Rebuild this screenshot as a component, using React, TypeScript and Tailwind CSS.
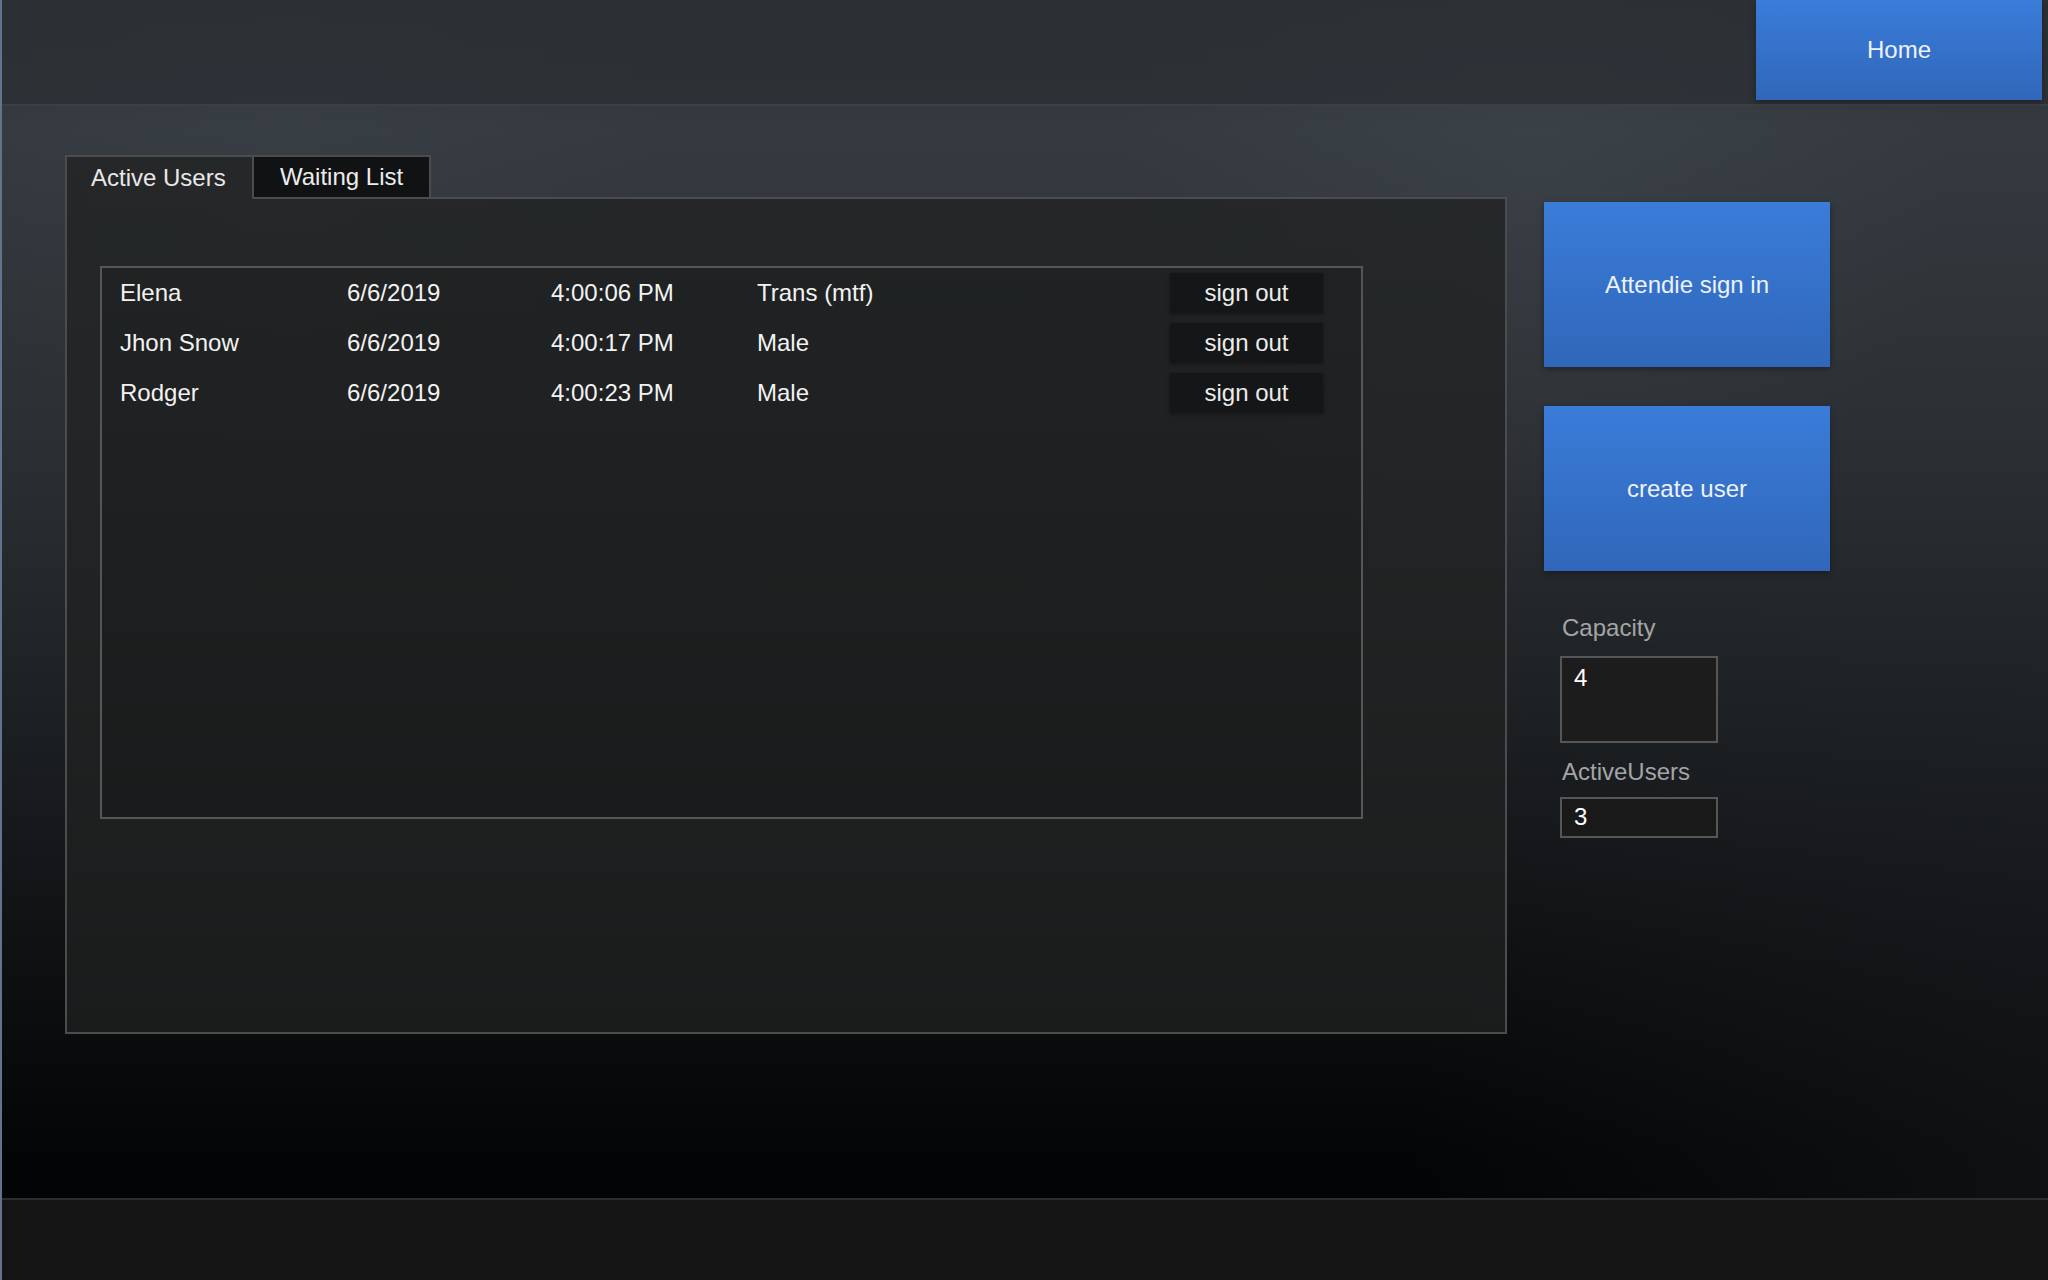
const users = [
  { name: "Elena", date: "6/6/2019", time: "4:00:06 PM", gender: "Trans (mtf)" },
  { name: "Jhon Snow", date: "6/6/2019", time: "4:00:17 PM", gender: "Male" },
  { name: "Rodger", date: "6/6/2019", time: "4:00:23 PM", gender: "Male" },
];

const blueBtn =
  "flex items-center justify-center bg-gradient-to-b from-[#3a7cd9] to-[#3067ba] text-[24px] text-[#eef2f8] shadow-[0_2px_6px_rgba(0,0,0,0.35)]";

export default function App() {
  return (
    <div className="relative flex h-[1280px] w-full flex-col overflow-hidden border-l-2 border-[#62748b] bg-[radial-gradient(circle_at_75%_12%,rgba(120,130,140,0.10),transparent_22%),radial-gradient(circle_at_14%_8%,rgba(120,130,140,0.06),transparent_18%),radial-gradient(circle_at_105%_95%,rgba(40,44,48,0.35),transparent_30%),linear-gradient(to_bottom,#2d3135_0%,#343a40_10%,#2b2f33_35%,#1e2124_55%,#0e1012_75%,#040506_90%,#020303_100%)] font-['Liberation_Sans',Arial,sans-serif]">
      {/* header */}
      <header className="flex h-[106px] shrink-0 justify-end border-b-2 border-[#3c4044] bg-[#2c3034]/80 pr-[6px]">
        <button className={blueBtn + " h-[100px] w-[286px]"}>Home</button>
      </header>

      <main className="flex flex-1 pl-[63px] pt-[49px]">
        {/* tabs + panel */}
        <div className="flex w-[1442px] flex-col">
          <div className="flex h-[44px] items-stretch">
            <div className="flex w-[187px] items-center border-l-2 border-t-2 border-[#4a4c4e] bg-[rgba(32,33,34,0.75)] pl-[24px] text-[24px] text-[#e8e8e8]">
              Active Users
            </div>
            <div className="flex w-[179px] items-center border-2 border-[#4a4c4e] bg-[#111214] pl-[26px] text-[24px] text-[#ececec]">
              Waiting List
            </div>
            <div className="flex-1 border-b-2 border-[#4a4c4e]" />
          </div>
          <div className="h-[835px] border-x-2 border-b-2 border-[#4a4c4e] bg-[rgba(32,33,34,0.75)] pl-[33px] pt-[67px]">
            <div className="h-[553px] w-[1263px] border-2 border-[#545658] bg-black/10 pl-[18px] pt-[5px]">
              <div className="flex flex-col gap-[10px]">
                {users.map((u) => (
                  <div key={u.name} className="flex h-[40px] items-center text-[24px] text-[#f2f2f2]">
                    <span className="w-[227px]">{u.name}</span>
                    <span className="w-[204px]">{u.date}</span>
                    <span className="w-[206px]">{u.time}</span>
                    <span className="w-[413px]">{u.gender}</span>
                    <button className="flex h-[40px] w-[153px] items-center justify-center bg-[#151617] text-[24px] text-[#ececec] shadow-[0_1px_4px_rgba(0,0,0,0.4)]">
                      sign out
                    </button>
                  </div>
                ))}
              </div>
            </div>
          </div>
        </div>

        {/* right column */}
        <div className="ml-[37px] flex flex-col pt-[47px]">
          <button className={blueBtn + " h-[165px] w-[286px]"}>Attendie sign in</button>
          <button className={blueBtn + " mt-[39px] h-[165px] w-[286px]"}>create user</button>

          <label className="ml-[18px] mt-[43px] text-[24px] leading-[28px] text-[#a3a5a7]">Capacity</label>
          <div className="ml-[16px] mt-[14px] h-[87px] w-[158px] border-2 border-[#555658] bg-[#1c1c1d] pl-[12px] pt-[6px] text-[24px] leading-[28px] text-white">
            4
          </div>

          <label className="ml-[18px] mt-[15px] text-[24px] leading-[28px] text-[#a3a5a7]">ActiveUsers</label>
          <div className="ml-[16px] mt-[11px] h-[41px] w-[158px] border-2 border-[#555658] bg-[#19191a] pl-[12px] pt-[4px] text-[24px] leading-[28px] text-white">
            3
          </div>
        </div>
      </main>

      {/* footer */}
      <footer className="h-[82px] shrink-0 border-t-2 border-[#2c2d2e] bg-[#141414]" />
    </div>
  );
}
